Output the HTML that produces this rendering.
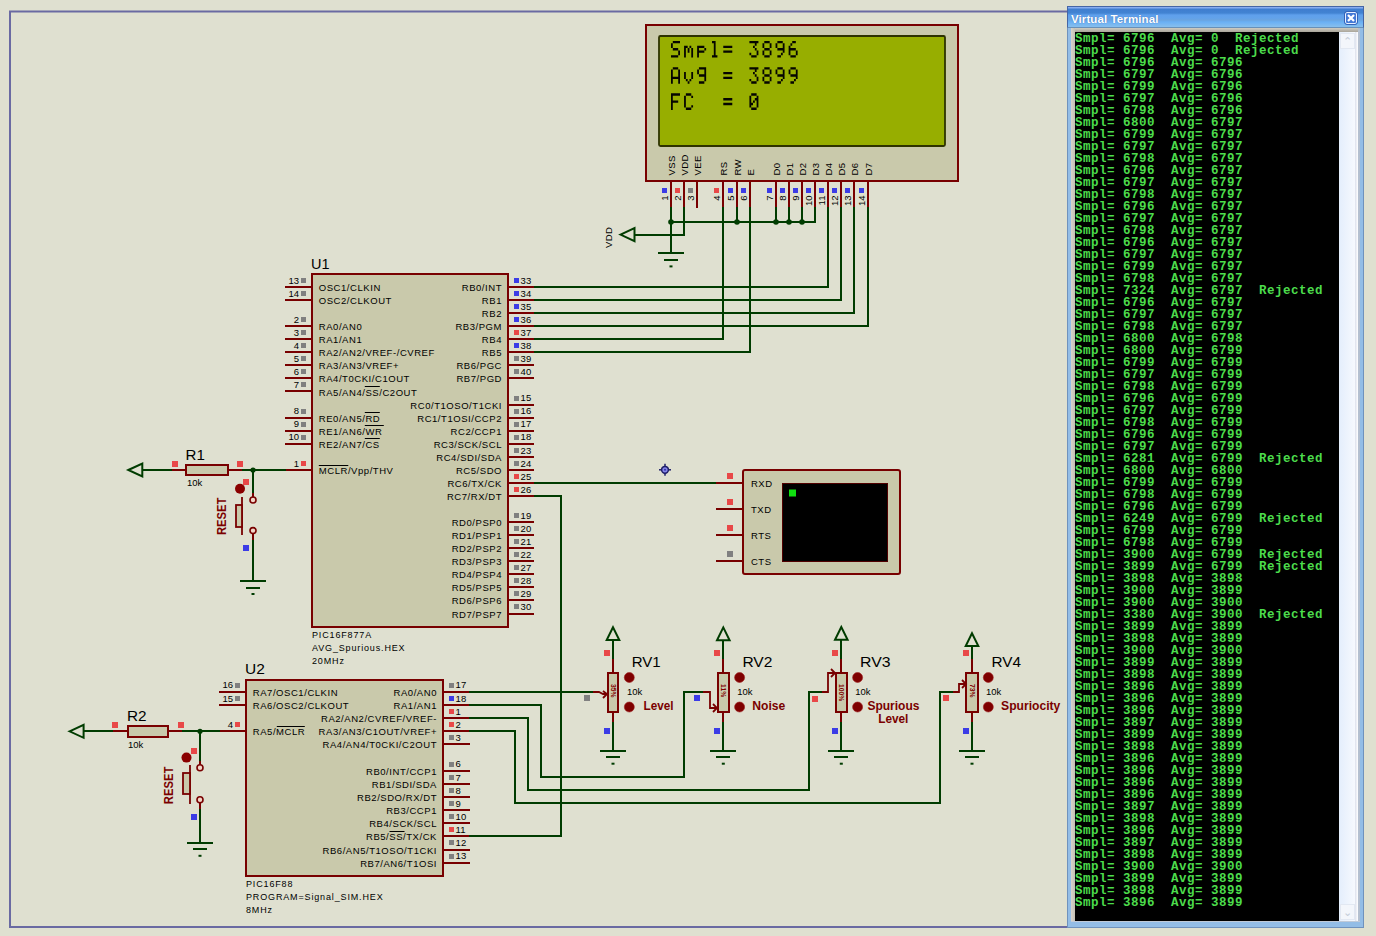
<!DOCTYPE html>
<html><head><meta charset="utf-8"><title>Proteus</title>
<style>
html,body{margin:0;padding:0;width:1376px;height:936px;overflow:hidden;background:#DFE0D0;}
body{position:relative;font-family:"Liberation Sans",sans-serif;}
.vt{position:absolute;box-sizing:border-box;}
#vtf{left:1067px;top:6px;width:297px;height:922px;background:#93bde6;border:1px solid #6f92bd;border-top-color:#4565a5;}
#vtt{left:1067px;top:6px;width:297px;height:22px;border:1px solid #4565a5;border-bottom:1px solid #6890b8;
 background:linear-gradient(#86acf0 0px,#86acf0 1px,#3f7dcf 2px,#4283d2 6px,#5fa0ec 8px,#62a2ea 11px,#6aa4e0 13px,#6ab0f4 15px,#82bcee 19px,#86c0ee 20px);}
#vtt span{position:absolute;left:3px;top:6px;color:#fff;font-weight:bold;font-size:11.5px;letter-spacing:0.1px;text-shadow:0 0 1px #3060b0;}
#vtc{left:1345px;top:12px;width:12px;height:12px;border:1px solid #e8f0ff;border-radius:2px;background:#4479d6;outline:1px solid #3563b8;}
#vti{left:1071px;top:28px;width:288px;height:894px;background:#fff;}
#vtgt{left:1071px;top:28px;width:287px;height:4px;background:linear-gradient(#cfccc2,#a9a59a);}
#vtgl{left:1071px;top:28px;width:4px;height:893px;background:linear-gradient(90deg,#d8d4cc,#c4c0b4);}
#vts{left:1075px;top:32px;width:264px;height:889px;background:#000;overflow:hidden;}
#vts pre{margin:0;position:absolute;left:0px;top:0.5px;font-family:"Liberation Mono",monospace;font-weight:bold;font-size:12.5px;line-height:12px;color:#4cdc4c;letter-spacing:0.5px;}
#vtsb{left:1339px;top:32px;width:16px;height:889px;background:linear-gradient(90deg,#e4eefc,#f6f9fe);}
#vtsb2{left:1355px;top:32px;width:3px;height:889px;background:linear-gradient(90deg,#dce0ec,#fff);}
#vtrb{left:1358px;top:28px;width:2px;height:894px;background:#b4c0d0;}
#vtbb{left:1071px;top:921px;width:289px;height:1px;background:#c0cad8;}
.sbb{left:1340px;width:15px;height:16px;border:1px solid #e2e8f2;background:#f3f6fb;color:#c4ccd8;font-size:11px;text-align:center;line-height:15px;}
</style></head><body>
<svg width="1376" height="936" viewBox="0 0 1376 936" style="position:absolute;left:0;top:0" font-family="Liberation Sans, sans-serif">
<rect x="0" y="0" width="1376" height="936" fill="#DFE0D0"/>
<rect x="10" y="11.5" width="1280" height="915.5" fill="none" stroke="#6a6aa2" stroke-width="2"/>
<rect x="312" y="274" width="196" height="353" fill="#C9C9AB" stroke="#780000" stroke-width="2" rx="0"/>
<line x1="285" y1="287" x2="312" y2="287" stroke="#780000" stroke-width="2"/>
<rect x="301" y="278" width="5" height="5" fill="#808080"/>
<text x="299.0" y="283.7" font-size="9.5" text-anchor="end" letter-spacing="0" fill="#000000" font-weight="normal" >13</text>
<text x="318.8" y="291.0" font-size="9.5" text-anchor="start" letter-spacing="0.55" fill="#000000" font-weight="normal" >OSC1/CLKIN</text>
<line x1="285" y1="300" x2="312" y2="300" stroke="#780000" stroke-width="2"/>
<rect x="301" y="291" width="5" height="5" fill="#808080"/>
<text x="299.0" y="296.8" font-size="9.5" text-anchor="end" letter-spacing="0" fill="#000000" font-weight="normal" >14</text>
<text x="318.8" y="304.1" font-size="9.5" text-anchor="start" letter-spacing="0.55" fill="#000000" font-weight="normal" >OSC2/CLKOUT</text>
<line x1="285" y1="326" x2="312" y2="326" stroke="#780000" stroke-width="2"/>
<rect x="301" y="317" width="5" height="5" fill="#808080"/>
<text x="299.0" y="322.9" font-size="9.5" text-anchor="end" letter-spacing="0" fill="#000000" font-weight="normal" >2</text>
<text x="318.8" y="330.2" font-size="9.5" text-anchor="start" letter-spacing="0.55" fill="#000000" font-weight="normal" >RA0/AN0</text>
<line x1="285" y1="339" x2="312" y2="339" stroke="#780000" stroke-width="2"/>
<rect x="301" y="330" width="5" height="5" fill="#808080"/>
<text x="299.0" y="335.9" font-size="9.5" text-anchor="end" letter-spacing="0" fill="#000000" font-weight="normal" >3</text>
<text x="318.8" y="343.2" font-size="9.5" text-anchor="start" letter-spacing="0.55" fill="#000000" font-weight="normal" >RA1/AN1</text>
<line x1="285" y1="352" x2="312" y2="352" stroke="#780000" stroke-width="2"/>
<rect x="301" y="343" width="5" height="5" fill="#808080"/>
<text x="299.0" y="349.0" font-size="9.5" text-anchor="end" letter-spacing="0" fill="#000000" font-weight="normal" >4</text>
<text x="318.8" y="356.3" font-size="9.5" text-anchor="start" letter-spacing="0.55" fill="#000000" font-weight="normal" >RA2/AN2/VREF-/CVREF</text>
<line x1="285" y1="365" x2="312" y2="365" stroke="#780000" stroke-width="2"/>
<rect x="301" y="356" width="5" height="5" fill="#808080"/>
<text x="299.0" y="362.1" font-size="9.5" text-anchor="end" letter-spacing="0" fill="#000000" font-weight="normal" >5</text>
<text x="318.8" y="369.4" font-size="9.5" text-anchor="start" letter-spacing="0.55" fill="#000000" font-weight="normal" >RA3/AN3/VREF+</text>
<line x1="285" y1="378" x2="312" y2="378" stroke="#780000" stroke-width="2"/>
<rect x="301" y="369" width="5" height="5" fill="#808080"/>
<text x="299.0" y="375.1" font-size="9.5" text-anchor="end" letter-spacing="0" fill="#000000" font-weight="normal" >6</text>
<text x="318.8" y="382.4" font-size="9.5" text-anchor="start" letter-spacing="0.55" fill="#000000" font-weight="normal" >RA4/T0CKI/C1OUT</text>
<line x1="285" y1="391" x2="312" y2="391" stroke="#780000" stroke-width="2"/>
<rect x="301" y="382" width="5" height="5" fill="#808080"/>
<text x="299.0" y="388.2" font-size="9.5" text-anchor="end" letter-spacing="0" fill="#000000" font-weight="normal" >7</text>
<text x="318.8" y="395.5" font-size="9.5" text-anchor="start" letter-spacing="0.55" fill="#000000" font-weight="normal" >RA5/AN4/SS/C2OUT</text>
<line x1="364.8" y1="386.5" x2="379.8" y2="386.5" stroke="#000" stroke-width="1"/>
<line x1="285" y1="418" x2="312" y2="418" stroke="#780000" stroke-width="2"/>
<rect x="301" y="409" width="5" height="5" fill="#808080"/>
<text x="299.0" y="414.3" font-size="9.5" text-anchor="end" letter-spacing="0" fill="#000000" font-weight="normal" >8</text>
<text x="318.8" y="421.6" font-size="9.5" text-anchor="start" letter-spacing="0.55" fill="#000000" font-weight="normal" >RE0/AN5/RD</text>
<line x1="364.8" y1="412.5" x2="379.8" y2="412.5" stroke="#000" stroke-width="1"/>
<line x1="285" y1="431" x2="312" y2="431" stroke="#780000" stroke-width="2"/>
<rect x="301" y="422" width="5" height="5" fill="#808080"/>
<text x="299.0" y="427.4" font-size="9.5" text-anchor="end" letter-spacing="0" fill="#000000" font-weight="normal" >9</text>
<text x="318.8" y="434.7" font-size="9.5" text-anchor="start" letter-spacing="0.55" fill="#000000" font-weight="normal" >RE1/AN6/WR</text>
<line x1="364.8" y1="425.5" x2="383.8" y2="425.5" stroke="#000" stroke-width="1"/>
<line x1="285" y1="444" x2="312" y2="444" stroke="#780000" stroke-width="2"/>
<rect x="301" y="435" width="5" height="5" fill="#808080"/>
<text x="299.0" y="440.4" font-size="9.5" text-anchor="end" letter-spacing="0" fill="#000000" font-weight="normal" >10</text>
<text x="318.8" y="447.7" font-size="9.5" text-anchor="start" letter-spacing="0.55" fill="#000000" font-weight="normal" >RE2/AN7/CS</text>
<line x1="364.8" y1="438.5" x2="379.8" y2="438.5" stroke="#000" stroke-width="1"/>
<line x1="285" y1="470" x2="312" y2="470" stroke="#780000" stroke-width="2"/>
<rect x="301" y="461" width="5" height="5" fill="#E84848"/>
<text x="299.0" y="466.5" font-size="9.5" text-anchor="end" letter-spacing="0" fill="#000000" font-weight="normal" >1</text>
<text x="318.8" y="473.8" font-size="9.5" text-anchor="start" letter-spacing="0.55" fill="#000000" font-weight="normal" >MCLR/Vpp/THV</text>
<line x1="318.8" y1="465.5" x2="348.3" y2="465.5" stroke="#000" stroke-width="1"/>
<line x1="508" y1="287" x2="534" y2="287" stroke="#780000" stroke-width="2"/>
<rect x="514" y="278" width="5" height="5" fill="#3C3CE6"/>
<text x="520.6" y="283.7" font-size="9.5" text-anchor="start" letter-spacing="0" fill="#000000" font-weight="normal" >33</text>
<text x="502.0" y="291.0" font-size="9.5" text-anchor="end" letter-spacing="0.55" fill="#000000" font-weight="normal" >RB0/INT</text>
<line x1="508" y1="300" x2="534" y2="300" stroke="#780000" stroke-width="2"/>
<rect x="514" y="291" width="5" height="5" fill="#3C3CE6"/>
<text x="520.6" y="296.8" font-size="9.5" text-anchor="start" letter-spacing="0" fill="#000000" font-weight="normal" >34</text>
<text x="502.0" y="304.1" font-size="9.5" text-anchor="end" letter-spacing="0.55" fill="#000000" font-weight="normal" >RB1</text>
<line x1="508" y1="313" x2="534" y2="313" stroke="#780000" stroke-width="2"/>
<rect x="514" y="304" width="5" height="5" fill="#3C3CE6"/>
<text x="520.6" y="309.8" font-size="9.5" text-anchor="start" letter-spacing="0" fill="#000000" font-weight="normal" >35</text>
<text x="502.0" y="317.1" font-size="9.5" text-anchor="end" letter-spacing="0.55" fill="#000000" font-weight="normal" >RB2</text>
<line x1="508" y1="326" x2="534" y2="326" stroke="#780000" stroke-width="2"/>
<rect x="514" y="317" width="5" height="5" fill="#3C3CE6"/>
<text x="520.6" y="322.9" font-size="9.5" text-anchor="start" letter-spacing="0" fill="#000000" font-weight="normal" >36</text>
<text x="502.0" y="330.2" font-size="9.5" text-anchor="end" letter-spacing="0.55" fill="#000000" font-weight="normal" >RB3/PGM</text>
<line x1="508" y1="339" x2="534" y2="339" stroke="#780000" stroke-width="2"/>
<rect x="514" y="330" width="5" height="5" fill="#E84848"/>
<text x="520.6" y="335.9" font-size="9.5" text-anchor="start" letter-spacing="0" fill="#000000" font-weight="normal" >37</text>
<text x="502.0" y="343.2" font-size="9.5" text-anchor="end" letter-spacing="0.55" fill="#000000" font-weight="normal" >RB4</text>
<line x1="508" y1="352" x2="534" y2="352" stroke="#780000" stroke-width="2"/>
<rect x="514" y="343" width="5" height="5" fill="#3C3CE6"/>
<text x="520.6" y="349.0" font-size="9.5" text-anchor="start" letter-spacing="0" fill="#000000" font-weight="normal" >38</text>
<text x="502.0" y="356.3" font-size="9.5" text-anchor="end" letter-spacing="0.55" fill="#000000" font-weight="normal" >RB5</text>
<line x1="508" y1="365" x2="534" y2="365" stroke="#780000" stroke-width="2"/>
<rect x="514" y="356" width="5" height="5" fill="#808080"/>
<text x="520.6" y="362.1" font-size="9.5" text-anchor="start" letter-spacing="0" fill="#000000" font-weight="normal" >39</text>
<text x="502.0" y="369.4" font-size="9.5" text-anchor="end" letter-spacing="0.55" fill="#000000" font-weight="normal" >RB6/PGC</text>
<line x1="508" y1="378" x2="534" y2="378" stroke="#780000" stroke-width="2"/>
<rect x="514" y="369" width="5" height="5" fill="#808080"/>
<text x="520.6" y="375.1" font-size="9.5" text-anchor="start" letter-spacing="0" fill="#000000" font-weight="normal" >40</text>
<text x="502.0" y="382.4" font-size="9.5" text-anchor="end" letter-spacing="0.55" fill="#000000" font-weight="normal" >RB7/PGD</text>
<line x1="508" y1="405" x2="534" y2="405" stroke="#780000" stroke-width="2"/>
<rect x="514" y="396" width="5" height="5" fill="#808080"/>
<text x="520.6" y="401.2" font-size="9.5" text-anchor="start" letter-spacing="0" fill="#000000" font-weight="normal" >15</text>
<text x="502.0" y="408.5" font-size="9.5" text-anchor="end" letter-spacing="0.55" fill="#000000" font-weight="normal" >RC0/T1OSO/T1CKI</text>
<line x1="508" y1="418" x2="534" y2="418" stroke="#780000" stroke-width="2"/>
<rect x="514" y="409" width="5" height="5" fill="#808080"/>
<text x="520.6" y="414.3" font-size="9.5" text-anchor="start" letter-spacing="0" fill="#000000" font-weight="normal" >16</text>
<text x="502.0" y="421.6" font-size="9.5" text-anchor="end" letter-spacing="0.55" fill="#000000" font-weight="normal" >RC1/T1OSI/CCP2</text>
<line x1="508" y1="431" x2="534" y2="431" stroke="#780000" stroke-width="2"/>
<rect x="514" y="422" width="5" height="5" fill="#808080"/>
<text x="520.6" y="427.4" font-size="9.5" text-anchor="start" letter-spacing="0" fill="#000000" font-weight="normal" >17</text>
<text x="502.0" y="434.7" font-size="9.5" text-anchor="end" letter-spacing="0.55" fill="#000000" font-weight="normal" >RC2/CCP1</text>
<line x1="508" y1="444" x2="534" y2="444" stroke="#780000" stroke-width="2"/>
<rect x="514" y="435" width="5" height="5" fill="#808080"/>
<text x="520.6" y="440.4" font-size="9.5" text-anchor="start" letter-spacing="0" fill="#000000" font-weight="normal" >18</text>
<text x="502.0" y="447.7" font-size="9.5" text-anchor="end" letter-spacing="0.55" fill="#000000" font-weight="normal" >RC3/SCK/SCL</text>
<line x1="508" y1="457" x2="534" y2="457" stroke="#780000" stroke-width="2"/>
<rect x="514" y="448" width="5" height="5" fill="#808080"/>
<text x="520.6" y="453.5" font-size="9.5" text-anchor="start" letter-spacing="0" fill="#000000" font-weight="normal" >23</text>
<text x="502.0" y="460.8" font-size="9.5" text-anchor="end" letter-spacing="0.55" fill="#000000" font-weight="normal" >RC4/SDI/SDA</text>
<line x1="508" y1="470" x2="534" y2="470" stroke="#780000" stroke-width="2"/>
<rect x="514" y="461" width="5" height="5" fill="#808080"/>
<text x="520.6" y="466.5" font-size="9.5" text-anchor="start" letter-spacing="0" fill="#000000" font-weight="normal" >24</text>
<text x="502.0" y="473.8" font-size="9.5" text-anchor="end" letter-spacing="0.55" fill="#000000" font-weight="normal" >RC5/SDO</text>
<line x1="508" y1="483" x2="534" y2="483" stroke="#780000" stroke-width="2"/>
<rect x="514" y="474" width="5" height="5" fill="#E84848"/>
<text x="520.6" y="479.6" font-size="9.5" text-anchor="start" letter-spacing="0" fill="#000000" font-weight="normal" >25</text>
<text x="502.0" y="486.9" font-size="9.5" text-anchor="end" letter-spacing="0.55" fill="#000000" font-weight="normal" >RC6/TX/CK</text>
<line x1="508" y1="496" x2="534" y2="496" stroke="#780000" stroke-width="2"/>
<rect x="514" y="487" width="5" height="5" fill="#E84848"/>
<text x="520.6" y="492.7" font-size="9.5" text-anchor="start" letter-spacing="0" fill="#000000" font-weight="normal" >26</text>
<text x="502.0" y="500.0" font-size="9.5" text-anchor="end" letter-spacing="0.55" fill="#000000" font-weight="normal" >RC7/RX/DT</text>
<line x1="508" y1="522" x2="534" y2="522" stroke="#780000" stroke-width="2"/>
<rect x="514" y="513" width="5" height="5" fill="#808080"/>
<text x="520.6" y="518.8" font-size="9.5" text-anchor="start" letter-spacing="0" fill="#000000" font-weight="normal" >19</text>
<text x="502.0" y="526.1" font-size="9.5" text-anchor="end" letter-spacing="0.55" fill="#000000" font-weight="normal" >RD0/PSP0</text>
<line x1="508" y1="535" x2="534" y2="535" stroke="#780000" stroke-width="2"/>
<rect x="514" y="526" width="5" height="5" fill="#808080"/>
<text x="520.6" y="531.8" font-size="9.5" text-anchor="start" letter-spacing="0" fill="#000000" font-weight="normal" >20</text>
<text x="502.0" y="539.1" font-size="9.5" text-anchor="end" letter-spacing="0.55" fill="#000000" font-weight="normal" >RD1/PSP1</text>
<line x1="508" y1="548" x2="534" y2="548" stroke="#780000" stroke-width="2"/>
<rect x="514" y="539" width="5" height="5" fill="#808080"/>
<text x="520.6" y="544.9" font-size="9.5" text-anchor="start" letter-spacing="0" fill="#000000" font-weight="normal" >21</text>
<text x="502.0" y="552.2" font-size="9.5" text-anchor="end" letter-spacing="0.55" fill="#000000" font-weight="normal" >RD2/PSP2</text>
<line x1="508" y1="561" x2="534" y2="561" stroke="#780000" stroke-width="2"/>
<rect x="514" y="552" width="5" height="5" fill="#808080"/>
<text x="520.6" y="558.0" font-size="9.5" text-anchor="start" letter-spacing="0" fill="#000000" font-weight="normal" >22</text>
<text x="502.0" y="565.3" font-size="9.5" text-anchor="end" letter-spacing="0.55" fill="#000000" font-weight="normal" >RD3/PSP3</text>
<line x1="508" y1="574" x2="534" y2="574" stroke="#780000" stroke-width="2"/>
<rect x="514" y="565" width="5" height="5" fill="#808080"/>
<text x="520.6" y="571.0" font-size="9.5" text-anchor="start" letter-spacing="0" fill="#000000" font-weight="normal" >27</text>
<text x="502.0" y="578.3" font-size="9.5" text-anchor="end" letter-spacing="0.55" fill="#000000" font-weight="normal" >RD4/PSP4</text>
<line x1="508" y1="587" x2="534" y2="587" stroke="#780000" stroke-width="2"/>
<rect x="514" y="578" width="5" height="5" fill="#808080"/>
<text x="520.6" y="584.1" font-size="9.5" text-anchor="start" letter-spacing="0" fill="#000000" font-weight="normal" >28</text>
<text x="502.0" y="591.4" font-size="9.5" text-anchor="end" letter-spacing="0.55" fill="#000000" font-weight="normal" >RD5/PSP5</text>
<line x1="508" y1="600" x2="534" y2="600" stroke="#780000" stroke-width="2"/>
<rect x="514" y="591" width="5" height="5" fill="#808080"/>
<text x="520.6" y="597.1" font-size="9.5" text-anchor="start" letter-spacing="0" fill="#000000" font-weight="normal" >29</text>
<text x="502.0" y="604.4" font-size="9.5" text-anchor="end" letter-spacing="0.55" fill="#000000" font-weight="normal" >RD6/PSP6</text>
<line x1="508" y1="614" x2="534" y2="614" stroke="#780000" stroke-width="2"/>
<rect x="514" y="604" width="5" height="5" fill="#808080"/>
<text x="520.6" y="610.2" font-size="9.5" text-anchor="start" letter-spacing="0" fill="#000000" font-weight="normal" >30</text>
<text x="502.0" y="617.5" font-size="9.5" text-anchor="end" letter-spacing="0.55" fill="#000000" font-weight="normal" >RD7/PSP7</text>
<text x="311.0" y="268.6" font-size="15.5" text-anchor="start" letter-spacing="0" fill="#000000" font-weight="normal" textLength="18.5" lengthAdjust="spacingAndGlyphs" >U1</text>
<text x="312.0" y="638.0" font-size="9" text-anchor="start" letter-spacing="0.85" fill="#000000" font-weight="normal" >PIC16F877A</text>
<text x="312.0" y="651.0" font-size="9" text-anchor="start" letter-spacing="0.85" fill="#000000" font-weight="normal" >AVG_Spurious.HEX</text>
<text x="312.0" y="664.0" font-size="9" text-anchor="start" letter-spacing="0.85" fill="#000000" font-weight="normal" >20MHz</text>
<rect x="246" y="680" width="197" height="196" fill="#C9C9AB" stroke="#780000" stroke-width="2" rx="0"/>
<line x1="219" y1="692" x2="246" y2="692" stroke="#780000" stroke-width="2"/>
<rect x="235" y="683" width="5" height="5" fill="#808080"/>
<text x="233.0" y="688.4" font-size="9.5" text-anchor="end" letter-spacing="0" fill="#000000" font-weight="normal" >16</text>
<text x="252.8" y="695.7" font-size="9.5" text-anchor="start" letter-spacing="0.55" fill="#000000" font-weight="normal" >RA7/OSC1/CLKIN</text>
<line x1="219" y1="705" x2="246" y2="705" stroke="#780000" stroke-width="2"/>
<rect x="235" y="696" width="5" height="5" fill="#808080"/>
<text x="233.0" y="701.6" font-size="9.5" text-anchor="end" letter-spacing="0" fill="#000000" font-weight="normal" >15</text>
<text x="252.8" y="708.9" font-size="9.5" text-anchor="start" letter-spacing="0.55" fill="#000000" font-weight="normal" >RA6/OSC2/CLKOUT</text>
<line x1="219" y1="731" x2="246" y2="731" stroke="#780000" stroke-width="2"/>
<rect x="235" y="722" width="5" height="5" fill="#E84848"/>
<text x="233.0" y="727.9" font-size="9.5" text-anchor="end" letter-spacing="0" fill="#000000" font-weight="normal" >4</text>
<text x="252.8" y="735.2" font-size="9.5" text-anchor="start" letter-spacing="0.55" fill="#000000" font-weight="normal" >RA5/MCLR</text>
<line x1="276.8" y1="726.5" x2="304.8" y2="726.5" stroke="#000" stroke-width="1"/>
<line x1="443" y1="692" x2="470" y2="692" stroke="#780000" stroke-width="2"/>
<rect x="449" y="683" width="5" height="5" fill="#808080"/>
<text x="455.6" y="688.4" font-size="9.5" text-anchor="start" letter-spacing="0" fill="#000000" font-weight="normal" >17</text>
<text x="437.0" y="695.7" font-size="9.5" text-anchor="end" letter-spacing="0.55" fill="#000000" font-weight="normal" >RA0/AN0</text>
<line x1="443" y1="705" x2="470" y2="705" stroke="#780000" stroke-width="2"/>
<rect x="449" y="696" width="5" height="5" fill="#3C3CE6"/>
<text x="455.6" y="701.6" font-size="9.5" text-anchor="start" letter-spacing="0" fill="#000000" font-weight="normal" >18</text>
<text x="437.0" y="708.9" font-size="9.5" text-anchor="end" letter-spacing="0.55" fill="#000000" font-weight="normal" >RA1/AN1</text>
<line x1="443" y1="718" x2="470" y2="718" stroke="#780000" stroke-width="2"/>
<rect x="449" y="709" width="5" height="5" fill="#E84848"/>
<text x="455.6" y="714.7" font-size="9.5" text-anchor="start" letter-spacing="0" fill="#000000" font-weight="normal" >1</text>
<text x="437.0" y="722.0" font-size="9.5" text-anchor="end" letter-spacing="0.55" fill="#000000" font-weight="normal" >RA2/AN2/CVREF/VREF-</text>
<line x1="443" y1="731" x2="470" y2="731" stroke="#780000" stroke-width="2"/>
<rect x="449" y="722" width="5" height="5" fill="#E84848"/>
<text x="455.6" y="727.9" font-size="9.5" text-anchor="start" letter-spacing="0" fill="#000000" font-weight="normal" >2</text>
<text x="437.0" y="735.2" font-size="9.5" text-anchor="end" letter-spacing="0.55" fill="#000000" font-weight="normal" >RA3/AN3/C1OUT/VREF+</text>
<line x1="443" y1="744" x2="470" y2="744" stroke="#780000" stroke-width="2"/>
<rect x="449" y="735" width="5" height="5" fill="#808080"/>
<text x="455.6" y="741.0" font-size="9.5" text-anchor="start" letter-spacing="0" fill="#000000" font-weight="normal" >3</text>
<text x="437.0" y="748.3" font-size="9.5" text-anchor="end" letter-spacing="0.55" fill="#000000" font-weight="normal" >RA4/AN4/T0CKI/C2OUT</text>
<line x1="443" y1="771" x2="470" y2="771" stroke="#780000" stroke-width="2"/>
<rect x="449" y="762" width="5" height="5" fill="#808080"/>
<text x="455.6" y="767.3" font-size="9.5" text-anchor="start" letter-spacing="0" fill="#000000" font-weight="normal" >6</text>
<text x="437.0" y="774.6" font-size="9.5" text-anchor="end" letter-spacing="0.55" fill="#000000" font-weight="normal" >RB0/INT/CCP1</text>
<line x1="443" y1="784" x2="470" y2="784" stroke="#780000" stroke-width="2"/>
<rect x="449" y="775" width="5" height="5" fill="#808080"/>
<text x="455.6" y="780.5" font-size="9.5" text-anchor="start" letter-spacing="0" fill="#000000" font-weight="normal" >7</text>
<text x="437.0" y="787.8" font-size="9.5" text-anchor="end" letter-spacing="0.55" fill="#000000" font-weight="normal" >RB1/SDI/SDA</text>
<line x1="443" y1="797" x2="470" y2="797" stroke="#780000" stroke-width="2"/>
<rect x="449" y="788" width="5" height="5" fill="#808080"/>
<text x="455.6" y="793.6" font-size="9.5" text-anchor="start" letter-spacing="0" fill="#000000" font-weight="normal" >8</text>
<text x="437.0" y="800.9" font-size="9.5" text-anchor="end" letter-spacing="0.55" fill="#000000" font-weight="normal" >RB2/SDO/RX/DT</text>
<line x1="443" y1="810" x2="470" y2="810" stroke="#780000" stroke-width="2"/>
<rect x="449" y="801" width="5" height="5" fill="#808080"/>
<text x="455.6" y="806.8" font-size="9.5" text-anchor="start" letter-spacing="0" fill="#000000" font-weight="normal" >9</text>
<text x="437.0" y="814.1" font-size="9.5" text-anchor="end" letter-spacing="0.55" fill="#000000" font-weight="normal" >RB3/CCP1</text>
<line x1="443" y1="823" x2="470" y2="823" stroke="#780000" stroke-width="2"/>
<rect x="449" y="814" width="5" height="5" fill="#808080"/>
<text x="455.6" y="819.9" font-size="9.5" text-anchor="start" letter-spacing="0" fill="#000000" font-weight="normal" >10</text>
<text x="437.0" y="827.2" font-size="9.5" text-anchor="end" letter-spacing="0.55" fill="#000000" font-weight="normal" >RB4/SCK/SCL</text>
<line x1="443" y1="836" x2="470" y2="836" stroke="#780000" stroke-width="2"/>
<rect x="449" y="827" width="5" height="5" fill="#E84848"/>
<text x="455.6" y="833.1" font-size="9.5" text-anchor="start" letter-spacing="0" fill="#000000" font-weight="normal" >11</text>
<text x="437.0" y="840.4" font-size="9.5" text-anchor="end" letter-spacing="0.55" fill="#000000" font-weight="normal" >RB5/SS/TX/CK</text>
<line x1="443" y1="850" x2="470" y2="850" stroke="#780000" stroke-width="2"/>
<rect x="449" y="840" width="5" height="5" fill="#808080"/>
<text x="455.6" y="846.2" font-size="9.5" text-anchor="start" letter-spacing="0" fill="#000000" font-weight="normal" >12</text>
<text x="437.0" y="853.5" font-size="9.5" text-anchor="end" letter-spacing="0.55" fill="#000000" font-weight="normal" >RB6/AN5/T1OSO/T1CKI</text>
<line x1="443" y1="863" x2="470" y2="863" stroke="#780000" stroke-width="2"/>
<rect x="449" y="854" width="5" height="5" fill="#808080"/>
<text x="455.6" y="859.4" font-size="9.5" text-anchor="start" letter-spacing="0" fill="#000000" font-weight="normal" >13</text>
<text x="437.0" y="866.7" font-size="9.5" text-anchor="end" letter-spacing="0.55" fill="#000000" font-weight="normal" >RB7/AN6/T1OSI</text>
<text x="245.0" y="674.0" font-size="15.5" text-anchor="start" letter-spacing="0" fill="#000000" font-weight="normal" textLength="19.8" lengthAdjust="spacingAndGlyphs" >U2</text>
<text x="246.0" y="886.5" font-size="9" text-anchor="start" letter-spacing="0.85" fill="#000000" font-weight="normal" >PIC16F88</text>
<text x="246.0" y="899.5" font-size="9" text-anchor="start" letter-spacing="0.85" fill="#000000" font-weight="normal" >PROGRAM=Signal_SIM.HEX</text>
<text x="246.0" y="912.5" font-size="9" text-anchor="start" letter-spacing="0.85" fill="#000000" font-weight="normal" >8MHz</text>
<line x1="389.5" y1="831.5" x2="404.5" y2="831.5" stroke="#000" stroke-width="1"/>
<rect x="646" y="25" width="312" height="156" fill="#C9C9AB" stroke="#780000" stroke-width="2" rx="0"/>
<rect x="659" y="36" width="286" height="110" fill="#97ae00" stroke="#2e3300" stroke-width="1.8" rx="1.5"/>
<path d="M672.80 41.00h1.80v2.37h-1.80zM674.60 41.00h1.80v2.37h-1.80zM676.40 41.00h1.80v2.37h-1.80zM678.20 41.00h1.80v2.37h-1.80zM671.00 43.37h1.80v2.37h-1.80zM671.00 45.74h1.80v2.37h-1.80zM672.80 48.11h1.80v2.37h-1.80zM674.60 48.11h1.80v2.37h-1.80zM676.40 48.11h1.80v2.37h-1.80zM678.20 50.48h1.80v2.37h-1.80zM678.20 52.85h1.80v2.37h-1.80zM671.00 55.22h1.80v2.37h-1.80zM672.80 55.22h1.80v2.37h-1.80zM674.60 55.22h1.80v2.37h-1.80zM676.40 55.22h1.80v2.37h-1.80zM684.07 45.74h1.80v2.37h-1.80zM685.87 45.74h1.80v2.37h-1.80zM689.47 45.74h1.80v2.37h-1.80zM684.07 48.11h1.80v2.37h-1.80zM687.67 48.11h1.80v2.37h-1.80zM691.27 48.11h1.80v2.37h-1.80zM684.07 50.48h1.80v2.37h-1.80zM687.67 50.48h1.80v2.37h-1.80zM691.27 50.48h1.80v2.37h-1.80zM684.07 52.85h1.80v2.37h-1.80zM691.27 52.85h1.80v2.37h-1.80zM684.07 55.22h1.80v2.37h-1.80zM691.27 55.22h1.80v2.37h-1.80zM697.14 45.74h1.80v2.37h-1.80zM698.94 45.74h1.80v2.37h-1.80zM700.74 45.74h1.80v2.37h-1.80zM702.54 45.74h1.80v2.37h-1.80zM697.14 48.11h1.80v2.37h-1.80zM704.34 48.11h1.80v2.37h-1.80zM697.14 50.48h1.80v2.37h-1.80zM698.94 50.48h1.80v2.37h-1.80zM700.74 50.48h1.80v2.37h-1.80zM702.54 50.48h1.80v2.37h-1.80zM697.14 52.85h1.80v2.37h-1.80zM697.14 55.22h1.80v2.37h-1.80zM712.01 41.00h1.80v2.37h-1.80zM713.81 41.00h1.80v2.37h-1.80zM713.81 43.37h1.80v2.37h-1.80zM713.81 45.74h1.80v2.37h-1.80zM713.81 48.11h1.80v2.37h-1.80zM713.81 50.48h1.80v2.37h-1.80zM713.81 52.85h1.80v2.37h-1.80zM712.01 55.22h1.80v2.37h-1.80zM713.81 55.22h1.80v2.37h-1.80zM715.61 55.22h1.80v2.37h-1.80zM723.28 45.74h1.80v2.37h-1.80zM725.08 45.74h1.80v2.37h-1.80zM726.88 45.74h1.80v2.37h-1.80zM728.68 45.74h1.80v2.37h-1.80zM730.48 45.74h1.80v2.37h-1.80zM723.28 50.48h1.80v2.37h-1.80zM725.08 50.48h1.80v2.37h-1.80zM726.88 50.48h1.80v2.37h-1.80zM728.68 50.48h1.80v2.37h-1.80zM730.48 50.48h1.80v2.37h-1.80zM749.42 41.00h1.80v2.37h-1.80zM751.22 41.00h1.80v2.37h-1.80zM753.02 41.00h1.80v2.37h-1.80zM754.82 41.00h1.80v2.37h-1.80zM756.62 41.00h1.80v2.37h-1.80zM754.82 43.37h1.80v2.37h-1.80zM753.02 45.74h1.80v2.37h-1.80zM754.82 48.11h1.80v2.37h-1.80zM756.62 50.48h1.80v2.37h-1.80zM749.42 52.85h1.80v2.37h-1.80zM756.62 52.85h1.80v2.37h-1.80zM751.22 55.22h1.80v2.37h-1.80zM753.02 55.22h1.80v2.37h-1.80zM754.82 55.22h1.80v2.37h-1.80zM764.29 41.00h1.80v2.37h-1.80zM766.09 41.00h1.80v2.37h-1.80zM767.89 41.00h1.80v2.37h-1.80zM762.49 43.37h1.80v2.37h-1.80zM769.69 43.37h1.80v2.37h-1.80zM762.49 45.74h1.80v2.37h-1.80zM769.69 45.74h1.80v2.37h-1.80zM764.29 48.11h1.80v2.37h-1.80zM766.09 48.11h1.80v2.37h-1.80zM767.89 48.11h1.80v2.37h-1.80zM762.49 50.48h1.80v2.37h-1.80zM769.69 50.48h1.80v2.37h-1.80zM762.49 52.85h1.80v2.37h-1.80zM769.69 52.85h1.80v2.37h-1.80zM764.29 55.22h1.80v2.37h-1.80zM766.09 55.22h1.80v2.37h-1.80zM767.89 55.22h1.80v2.37h-1.80zM777.36 41.00h1.80v2.37h-1.80zM779.16 41.00h1.80v2.37h-1.80zM780.96 41.00h1.80v2.37h-1.80zM775.56 43.37h1.80v2.37h-1.80zM782.76 43.37h1.80v2.37h-1.80zM775.56 45.74h1.80v2.37h-1.80zM782.76 45.74h1.80v2.37h-1.80zM777.36 48.11h1.80v2.37h-1.80zM779.16 48.11h1.80v2.37h-1.80zM780.96 48.11h1.80v2.37h-1.80zM782.76 48.11h1.80v2.37h-1.80zM782.76 50.48h1.80v2.37h-1.80zM780.96 52.85h1.80v2.37h-1.80zM777.36 55.22h1.80v2.37h-1.80zM779.16 55.22h1.80v2.37h-1.80zM792.23 41.00h1.80v2.37h-1.80zM794.03 41.00h1.80v2.37h-1.80zM790.43 43.37h1.80v2.37h-1.80zM788.63 45.74h1.80v2.37h-1.80zM788.63 48.11h1.80v2.37h-1.80zM790.43 48.11h1.80v2.37h-1.80zM792.23 48.11h1.80v2.37h-1.80zM794.03 48.11h1.80v2.37h-1.80zM788.63 50.48h1.80v2.37h-1.80zM795.83 50.48h1.80v2.37h-1.80zM788.63 52.85h1.80v2.37h-1.80zM795.83 52.85h1.80v2.37h-1.80zM790.43 55.22h1.80v2.37h-1.80zM792.23 55.22h1.80v2.37h-1.80zM794.03 55.22h1.80v2.37h-1.80zM672.80 67.15h1.80v2.37h-1.80zM674.60 67.15h1.80v2.37h-1.80zM676.40 67.15h1.80v2.37h-1.80zM671.00 69.52h1.80v2.37h-1.80zM678.20 69.52h1.80v2.37h-1.80zM671.00 71.89h1.80v2.37h-1.80zM678.20 71.89h1.80v2.37h-1.80zM671.00 74.26h1.80v2.37h-1.80zM678.20 74.26h1.80v2.37h-1.80zM671.00 76.63h1.80v2.37h-1.80zM672.80 76.63h1.80v2.37h-1.80zM674.60 76.63h1.80v2.37h-1.80zM676.40 76.63h1.80v2.37h-1.80zM678.20 76.63h1.80v2.37h-1.80zM671.00 79.00h1.80v2.37h-1.80zM678.20 79.00h1.80v2.37h-1.80zM671.00 81.37h1.80v2.37h-1.80zM678.20 81.37h1.80v2.37h-1.80zM684.07 71.89h1.80v2.37h-1.80zM691.27 71.89h1.80v2.37h-1.80zM684.07 74.26h1.80v2.37h-1.80zM691.27 74.26h1.80v2.37h-1.80zM684.07 76.63h1.80v2.37h-1.80zM691.27 76.63h1.80v2.37h-1.80zM685.87 79.00h1.80v2.37h-1.80zM689.47 79.00h1.80v2.37h-1.80zM687.67 81.37h1.80v2.37h-1.80zM698.94 67.15h1.80v2.37h-1.80zM700.74 67.15h1.80v2.37h-1.80zM702.54 67.15h1.80v2.37h-1.80zM704.34 67.15h1.80v2.37h-1.80zM697.14 69.52h1.80v2.37h-1.80zM704.34 69.52h1.80v2.37h-1.80zM697.14 71.89h1.80v2.37h-1.80zM704.34 71.89h1.80v2.37h-1.80zM698.94 74.26h1.80v2.37h-1.80zM700.74 74.26h1.80v2.37h-1.80zM702.54 74.26h1.80v2.37h-1.80zM704.34 74.26h1.80v2.37h-1.80zM704.34 76.63h1.80v2.37h-1.80zM704.34 79.00h1.80v2.37h-1.80zM698.94 81.37h1.80v2.37h-1.80zM700.74 81.37h1.80v2.37h-1.80zM702.54 81.37h1.80v2.37h-1.80zM723.28 71.89h1.80v2.37h-1.80zM725.08 71.89h1.80v2.37h-1.80zM726.88 71.89h1.80v2.37h-1.80zM728.68 71.89h1.80v2.37h-1.80zM730.48 71.89h1.80v2.37h-1.80zM723.28 76.63h1.80v2.37h-1.80zM725.08 76.63h1.80v2.37h-1.80zM726.88 76.63h1.80v2.37h-1.80zM728.68 76.63h1.80v2.37h-1.80zM730.48 76.63h1.80v2.37h-1.80zM749.42 67.15h1.80v2.37h-1.80zM751.22 67.15h1.80v2.37h-1.80zM753.02 67.15h1.80v2.37h-1.80zM754.82 67.15h1.80v2.37h-1.80zM756.62 67.15h1.80v2.37h-1.80zM754.82 69.52h1.80v2.37h-1.80zM753.02 71.89h1.80v2.37h-1.80zM754.82 74.26h1.80v2.37h-1.80zM756.62 76.63h1.80v2.37h-1.80zM749.42 79.00h1.80v2.37h-1.80zM756.62 79.00h1.80v2.37h-1.80zM751.22 81.37h1.80v2.37h-1.80zM753.02 81.37h1.80v2.37h-1.80zM754.82 81.37h1.80v2.37h-1.80zM764.29 67.15h1.80v2.37h-1.80zM766.09 67.15h1.80v2.37h-1.80zM767.89 67.15h1.80v2.37h-1.80zM762.49 69.52h1.80v2.37h-1.80zM769.69 69.52h1.80v2.37h-1.80zM762.49 71.89h1.80v2.37h-1.80zM769.69 71.89h1.80v2.37h-1.80zM764.29 74.26h1.80v2.37h-1.80zM766.09 74.26h1.80v2.37h-1.80zM767.89 74.26h1.80v2.37h-1.80zM762.49 76.63h1.80v2.37h-1.80zM769.69 76.63h1.80v2.37h-1.80zM762.49 79.00h1.80v2.37h-1.80zM769.69 79.00h1.80v2.37h-1.80zM764.29 81.37h1.80v2.37h-1.80zM766.09 81.37h1.80v2.37h-1.80zM767.89 81.37h1.80v2.37h-1.80zM777.36 67.15h1.80v2.37h-1.80zM779.16 67.15h1.80v2.37h-1.80zM780.96 67.15h1.80v2.37h-1.80zM775.56 69.52h1.80v2.37h-1.80zM782.76 69.52h1.80v2.37h-1.80zM775.56 71.89h1.80v2.37h-1.80zM782.76 71.89h1.80v2.37h-1.80zM777.36 74.26h1.80v2.37h-1.80zM779.16 74.26h1.80v2.37h-1.80zM780.96 74.26h1.80v2.37h-1.80zM782.76 74.26h1.80v2.37h-1.80zM782.76 76.63h1.80v2.37h-1.80zM780.96 79.00h1.80v2.37h-1.80zM777.36 81.37h1.80v2.37h-1.80zM779.16 81.37h1.80v2.37h-1.80zM790.43 67.15h1.80v2.37h-1.80zM792.23 67.15h1.80v2.37h-1.80zM794.03 67.15h1.80v2.37h-1.80zM788.63 69.52h1.80v2.37h-1.80zM795.83 69.52h1.80v2.37h-1.80zM788.63 71.89h1.80v2.37h-1.80zM795.83 71.89h1.80v2.37h-1.80zM790.43 74.26h1.80v2.37h-1.80zM792.23 74.26h1.80v2.37h-1.80zM794.03 74.26h1.80v2.37h-1.80zM795.83 74.26h1.80v2.37h-1.80zM795.83 76.63h1.80v2.37h-1.80zM794.03 79.00h1.80v2.37h-1.80zM790.43 81.37h1.80v2.37h-1.80zM792.23 81.37h1.80v2.37h-1.80zM671.00 93.30h1.80v2.37h-1.80zM672.80 93.30h1.80v2.37h-1.80zM674.60 93.30h1.80v2.37h-1.80zM676.40 93.30h1.80v2.37h-1.80zM678.20 93.30h1.80v2.37h-1.80zM671.00 95.67h1.80v2.37h-1.80zM671.00 98.04h1.80v2.37h-1.80zM671.00 100.41h1.80v2.37h-1.80zM672.80 100.41h1.80v2.37h-1.80zM674.60 100.41h1.80v2.37h-1.80zM676.40 100.41h1.80v2.37h-1.80zM671.00 102.78h1.80v2.37h-1.80zM671.00 105.15h1.80v2.37h-1.80zM671.00 107.52h1.80v2.37h-1.80zM685.87 93.30h1.80v2.37h-1.80zM687.67 93.30h1.80v2.37h-1.80zM689.47 93.30h1.80v2.37h-1.80zM684.07 95.67h1.80v2.37h-1.80zM691.27 95.67h1.80v2.37h-1.80zM684.07 98.04h1.80v2.37h-1.80zM684.07 100.41h1.80v2.37h-1.80zM684.07 102.78h1.80v2.37h-1.80zM684.07 105.15h1.80v2.37h-1.80zM691.27 105.15h1.80v2.37h-1.80zM685.87 107.52h1.80v2.37h-1.80zM687.67 107.52h1.80v2.37h-1.80zM689.47 107.52h1.80v2.37h-1.80zM723.28 98.04h1.80v2.37h-1.80zM725.08 98.04h1.80v2.37h-1.80zM726.88 98.04h1.80v2.37h-1.80zM728.68 98.04h1.80v2.37h-1.80zM730.48 98.04h1.80v2.37h-1.80zM723.28 102.78h1.80v2.37h-1.80zM725.08 102.78h1.80v2.37h-1.80zM726.88 102.78h1.80v2.37h-1.80zM728.68 102.78h1.80v2.37h-1.80zM730.48 102.78h1.80v2.37h-1.80zM751.22 93.30h1.80v2.37h-1.80zM753.02 93.30h1.80v2.37h-1.80zM754.82 93.30h1.80v2.37h-1.80zM749.42 95.67h1.80v2.37h-1.80zM756.62 95.67h1.80v2.37h-1.80zM749.42 98.04h1.80v2.37h-1.80zM754.82 98.04h1.80v2.37h-1.80zM756.62 98.04h1.80v2.37h-1.80zM749.42 100.41h1.80v2.37h-1.80zM753.02 100.41h1.80v2.37h-1.80zM756.62 100.41h1.80v2.37h-1.80zM749.42 102.78h1.80v2.37h-1.80zM751.22 102.78h1.80v2.37h-1.80zM756.62 102.78h1.80v2.37h-1.80zM749.42 105.15h1.80v2.37h-1.80zM756.62 105.15h1.80v2.37h-1.80zM751.22 107.52h1.80v2.37h-1.80zM753.02 107.52h1.80v2.37h-1.80zM754.82 107.52h1.80v2.37h-1.80z" fill="#050500"/>
<line x1="671" y1="181" x2="671" y2="208" stroke="#780000" stroke-width="2"/>
<rect x="662" y="188" width="5" height="5" fill="#3C3CE6"/>
<text x="0.0" y="0.0" font-size="9.5" text-anchor="end" letter-spacing="0" fill="#000000" font-weight="normal" transform="translate(668.2,195.5) rotate(-90)">1</text>
<text x="0.0" y="0.0" font-size="9.5" text-anchor="start" letter-spacing="0.4" fill="#000000" font-weight="normal" transform="translate(674.8,175.5) rotate(-90)">VSS</text>
<line x1="684" y1="181" x2="684" y2="208" stroke="#780000" stroke-width="2"/>
<rect x="675" y="188" width="5" height="5" fill="#E84848"/>
<text x="0.0" y="0.0" font-size="9.5" text-anchor="end" letter-spacing="0" fill="#000000" font-weight="normal" transform="translate(681.2,195.5) rotate(-90)">2</text>
<text x="0.0" y="0.0" font-size="9.5" text-anchor="start" letter-spacing="0.4" fill="#000000" font-weight="normal" transform="translate(687.8,175.5) rotate(-90)">VDD</text>
<line x1="697" y1="181" x2="697" y2="208" stroke="#780000" stroke-width="2"/>
<rect x="688" y="188" width="5" height="5" fill="#808080"/>
<text x="0.0" y="0.0" font-size="9.5" text-anchor="end" letter-spacing="0" fill="#000000" font-weight="normal" transform="translate(694.2,195.5) rotate(-90)">3</text>
<text x="0.0" y="0.0" font-size="9.5" text-anchor="start" letter-spacing="0.4" fill="#000000" font-weight="normal" transform="translate(700.8,175.5) rotate(-90)">VEE</text>
<line x1="723" y1="181" x2="723" y2="208" stroke="#780000" stroke-width="2"/>
<rect x="714" y="188" width="5" height="5" fill="#E84848"/>
<text x="0.0" y="0.0" font-size="9.5" text-anchor="end" letter-spacing="0" fill="#000000" font-weight="normal" transform="translate(720.2,195.5) rotate(-90)">4</text>
<text x="0.0" y="0.0" font-size="9.5" text-anchor="start" letter-spacing="0.4" fill="#000000" font-weight="normal" transform="translate(726.8,175.5) rotate(-90)">RS</text>
<line x1="737" y1="181" x2="737" y2="208" stroke="#780000" stroke-width="2"/>
<rect x="728" y="188" width="5" height="5" fill="#3C3CE6"/>
<text x="0.0" y="0.0" font-size="9.5" text-anchor="end" letter-spacing="0" fill="#000000" font-weight="normal" transform="translate(734.2,195.5) rotate(-90)">5</text>
<text x="0.0" y="0.0" font-size="9.5" text-anchor="start" letter-spacing="0.4" fill="#000000" font-weight="normal" transform="translate(740.8,175.5) rotate(-90)">RW</text>
<line x1="750" y1="181" x2="750" y2="208" stroke="#780000" stroke-width="2"/>
<rect x="741" y="188" width="5" height="5" fill="#3C3CE6"/>
<text x="0.0" y="0.0" font-size="9.5" text-anchor="end" letter-spacing="0" fill="#000000" font-weight="normal" transform="translate(747.2,195.5) rotate(-90)">6</text>
<text x="0.0" y="0.0" font-size="9.5" text-anchor="start" letter-spacing="0.4" fill="#000000" font-weight="normal" transform="translate(753.8,175.5) rotate(-90)">E</text>
<line x1="776" y1="181" x2="776" y2="208" stroke="#780000" stroke-width="2"/>
<rect x="767" y="188" width="5" height="5" fill="#3C3CE6"/>
<text x="0.0" y="0.0" font-size="9.5" text-anchor="end" letter-spacing="0" fill="#000000" font-weight="normal" transform="translate(773.2,195.5) rotate(-90)">7</text>
<text x="0.0" y="0.0" font-size="9.5" text-anchor="start" letter-spacing="0.4" fill="#000000" font-weight="normal" transform="translate(779.8,175.5) rotate(-90)">D0</text>
<line x1="789" y1="181" x2="789" y2="208" stroke="#780000" stroke-width="2"/>
<rect x="780" y="188" width="5" height="5" fill="#3C3CE6"/>
<text x="0.0" y="0.0" font-size="9.5" text-anchor="end" letter-spacing="0" fill="#000000" font-weight="normal" transform="translate(786.2,195.5) rotate(-90)">8</text>
<text x="0.0" y="0.0" font-size="9.5" text-anchor="start" letter-spacing="0.4" fill="#000000" font-weight="normal" transform="translate(792.8,175.5) rotate(-90)">D1</text>
<line x1="802" y1="181" x2="802" y2="208" stroke="#780000" stroke-width="2"/>
<rect x="793" y="188" width="5" height="5" fill="#3C3CE6"/>
<text x="0.0" y="0.0" font-size="9.5" text-anchor="end" letter-spacing="0" fill="#000000" font-weight="normal" transform="translate(799.2,195.5) rotate(-90)">9</text>
<text x="0.0" y="0.0" font-size="9.5" text-anchor="start" letter-spacing="0.4" fill="#000000" font-weight="normal" transform="translate(805.8,175.5) rotate(-90)">D2</text>
<line x1="815" y1="181" x2="815" y2="208" stroke="#780000" stroke-width="2"/>
<rect x="806" y="188" width="5" height="5" fill="#3C3CE6"/>
<text x="0.0" y="0.0" font-size="9.5" text-anchor="end" letter-spacing="0" fill="#000000" font-weight="normal" transform="translate(812.2,195.5) rotate(-90)">10</text>
<text x="0.0" y="0.0" font-size="9.5" text-anchor="start" letter-spacing="0.4" fill="#000000" font-weight="normal" transform="translate(818.8,175.5) rotate(-90)">D3</text>
<line x1="828" y1="181" x2="828" y2="208" stroke="#780000" stroke-width="2"/>
<rect x="819" y="188" width="5" height="5" fill="#3C3CE6"/>
<text x="0.0" y="0.0" font-size="9.5" text-anchor="end" letter-spacing="0" fill="#000000" font-weight="normal" transform="translate(825.2,195.5) rotate(-90)">11</text>
<text x="0.0" y="0.0" font-size="9.5" text-anchor="start" letter-spacing="0.4" fill="#000000" font-weight="normal" transform="translate(831.8,175.5) rotate(-90)">D4</text>
<line x1="841" y1="181" x2="841" y2="208" stroke="#780000" stroke-width="2"/>
<rect x="832" y="188" width="5" height="5" fill="#3C3CE6"/>
<text x="0.0" y="0.0" font-size="9.5" text-anchor="end" letter-spacing="0" fill="#000000" font-weight="normal" transform="translate(838.2,195.5) rotate(-90)">12</text>
<text x="0.0" y="0.0" font-size="9.5" text-anchor="start" letter-spacing="0.4" fill="#000000" font-weight="normal" transform="translate(844.8,175.5) rotate(-90)">D5</text>
<line x1="854" y1="181" x2="854" y2="208" stroke="#780000" stroke-width="2"/>
<rect x="845" y="188" width="5" height="5" fill="#3C3CE6"/>
<text x="0.0" y="0.0" font-size="9.5" text-anchor="end" letter-spacing="0" fill="#000000" font-weight="normal" transform="translate(851.2,195.5) rotate(-90)">13</text>
<text x="0.0" y="0.0" font-size="9.5" text-anchor="start" letter-spacing="0.4" fill="#000000" font-weight="normal" transform="translate(857.8,175.5) rotate(-90)">D6</text>
<line x1="868" y1="181" x2="868" y2="208" stroke="#780000" stroke-width="2"/>
<rect x="859" y="188" width="5" height="5" fill="#3C3CE6"/>
<text x="0.0" y="0.0" font-size="9.5" text-anchor="end" letter-spacing="0" fill="#000000" font-weight="normal" transform="translate(865.2,195.5) rotate(-90)">14</text>
<text x="0.0" y="0.0" font-size="9.5" text-anchor="start" letter-spacing="0.4" fill="#000000" font-weight="normal" transform="translate(871.8,175.5) rotate(-90)">D7</text>
<polyline points="671,207 671,253" fill="none" stroke="#003c00" stroke-width="2" stroke-linejoin="miter"/>
<polyline points="684,207 684,235 634,235" fill="none" stroke="#003c00" stroke-width="2" stroke-linejoin="miter"/>
<polygon points="620.5,234.6 634.5,228.1 634.5,241.1" fill="none" stroke="#003c00" stroke-width="2"/>
<text x="0.0" y="0.0" font-size="9.5" text-anchor="start" letter-spacing="0.4" fill="#000000" font-weight="normal" transform="translate(612,248) rotate(-90)">VDD</text>
<line x1="658" y1="253" x2="684" y2="253" stroke="#003c00" stroke-width="2"/>
<line x1="664" y1="260" x2="678" y2="260" stroke="#003c00" stroke-width="2"/>
<rect x="669.5" y="265.4" width="3" height="2" fill="#003c00"/>
<line x1="670" y1="222" x2="816" y2="222" stroke="#003c00" stroke-width="2"/>
<line x1="737" y1="207" x2="737" y2="222" stroke="#003c00" stroke-width="2"/>
<line x1="776" y1="207" x2="776" y2="222" stroke="#003c00" stroke-width="2"/>
<line x1="789" y1="207" x2="789" y2="222" stroke="#003c00" stroke-width="2"/>
<line x1="802" y1="207" x2="802" y2="222" stroke="#003c00" stroke-width="2"/>
<polyline points="815,207 815,222" fill="none" stroke="#003c00" stroke-width="2" stroke-linejoin="miter"/>
<circle cx="671.0" cy="222.0" r="2.8" fill="#003c00"/>
<circle cx="737.0" cy="222.0" r="2.8" fill="#003c00"/>
<circle cx="776.0" cy="222.0" r="2.8" fill="#003c00"/>
<circle cx="789.0" cy="222.0" r="2.8" fill="#003c00"/>
<circle cx="802.0" cy="222.0" r="2.8" fill="#003c00"/>
<polyline points="534,287 828,287 828,207" fill="none" stroke="#003c00" stroke-width="2" stroke-linejoin="miter"/>
<polyline points="534,300 841,300 841,207" fill="none" stroke="#003c00" stroke-width="2" stroke-linejoin="miter"/>
<polyline points="534,313 854,313 854,207" fill="none" stroke="#003c00" stroke-width="2" stroke-linejoin="miter"/>
<polyline points="534,326 868,326 868,207" fill="none" stroke="#003c00" stroke-width="2" stroke-linejoin="miter"/>
<polyline points="534,339 723,339 723,207" fill="none" stroke="#003c00" stroke-width="2" stroke-linejoin="miter"/>
<polyline points="534,352 750,352 750,207" fill="none" stroke="#003c00" stroke-width="2" stroke-linejoin="miter"/>
<line x1="534" y1="483" x2="716" y2="483" stroke="#003c00" stroke-width="2"/>
<polyline points="534,496 561,496 561,836 469,836" fill="none" stroke="#003c00" stroke-width="2" stroke-linejoin="miter"/>
<rect x="743" y="470" width="157" height="104" fill="#C9C9AB" stroke="#780000" stroke-width="2" rx="2"/>
<rect x="782.5" y="483.5" width="105.0" height="78.0" fill="#000" stroke="#500000" stroke-width="1" rx="0"/>
<rect x="789" y="489.5" width="7" height="7" fill="#10e010"/>
<line x1="716" y1="483" x2="743" y2="483" stroke="#780000" stroke-width="2"/>
<rect x="727" y="473" width="6" height="6" fill="#E84848"/>
<text x="751.0" y="487.0" font-size="9.5" text-anchor="start" letter-spacing="0.5" fill="#000000" font-weight="normal" >RXD</text>
<line x1="716" y1="509" x2="743" y2="509" stroke="#780000" stroke-width="2"/>
<rect x="727" y="499" width="6" height="6" fill="#E84848"/>
<text x="751.0" y="513.0" font-size="9.5" text-anchor="start" letter-spacing="0.5" fill="#000000" font-weight="normal" >TXD</text>
<line x1="716" y1="535" x2="743" y2="535" stroke="#780000" stroke-width="2"/>
<rect x="727" y="525" width="6" height="6" fill="#E84848"/>
<text x="751.0" y="539.0" font-size="9.5" text-anchor="start" letter-spacing="0.5" fill="#000000" font-weight="normal" >RTS</text>
<line x1="716" y1="561" x2="743" y2="561" stroke="#780000" stroke-width="2"/>
<rect x="727" y="551" width="6" height="6" fill="#808080"/>
<text x="751.0" y="565.0" font-size="9.5" text-anchor="start" letter-spacing="0.5" fill="#000000" font-weight="normal" >CTS</text>
<line x1="534" y1="483" x2="716" y2="483" stroke="#003c00" stroke-width="2"/>
<g stroke="#1e1e68" stroke-width="1.5"><circle cx="665" cy="469.8" r="3.4" fill="#8585e8"/><line x1="659" y1="469.8" x2="661.6" y2="469.8"/><line x1="668.4" y1="469.8" x2="671" y2="469.8"/><line x1="665" y1="463.8" x2="665" y2="466.4"/><line x1="665" y1="473.2" x2="665" y2="475.8"/></g><circle cx="665" cy="469.8" r="1" fill="#3030a0"/>
<polygon points="128.3,470.0 142.3,463.5 142.3,476.5" fill="none" stroke="#003c00" stroke-width="2"/>
<line x1="142" y1="470" x2="186" y2="470" stroke="#003c00" stroke-width="2"/>
<rect x="186" y="465" width="42" height="10" fill="#C9C9AB" stroke="#780000" stroke-width="2" rx="0"/>
<line x1="228" y1="470" x2="286" y2="470" stroke="#003c00" stroke-width="2"/>
<line x1="172" y1="470" x2="186" y2="470" stroke="#780000" stroke-width="2"/>
<line x1="228" y1="470" x2="242" y2="470" stroke="#780000" stroke-width="2"/>
<circle cx="253.0" cy="470.0" r="2.6" fill="#003c00"/>
<rect x="172" y="461" width="6" height="6" fill="#E84848"/>
<rect x="237" y="461" width="6" height="6" fill="#E84848"/>
<text x="185.6" y="459.8" font-size="15.5" text-anchor="start" letter-spacing="0" fill="#000000" font-weight="normal" textLength="19.3" lengthAdjust="spacingAndGlyphs" >R1</text>
<text x="187.0" y="485.6" font-size="9.5" text-anchor="start" letter-spacing="0" fill="#000000" font-weight="normal" >10k</text>
<line x1="253" y1="470" x2="253" y2="493" stroke="#003c00" stroke-width="2"/>
<line x1="253" y1="493" x2="253" y2="500" stroke="#780000" stroke-width="2"/>
<line x1="253" y1="531" x2="253" y2="540" stroke="#780000" stroke-width="2"/>
<line x1="253" y1="540" x2="253" y2="581" stroke="#003c00" stroke-width="2"/>
<circle cx="253" cy="500" r="3" fill="#f2d6c8" stroke="#780000" stroke-width="1.6"/>
<circle cx="253" cy="530.6" r="3" fill="#f2d6c8" stroke="#780000" stroke-width="1.6"/>
<line x1="242" y1="497" x2="242" y2="535" stroke="#780000" stroke-width="1.8"/>
<rect x="236" y="505" width="6" height="22" fill="#C9C9AB" stroke="#780000" stroke-width="1.8" rx="0"/>
<circle cx="240" cy="488.8" r="5" fill="#8a0000"/>
<rect x="243" y="479" width="6" height="6" fill="#E84848"/>
<rect x="243" y="545" width="6" height="6" fill="#3C3CE6"/>
<line x1="240" y1="581" x2="266" y2="581" stroke="#003c00" stroke-width="2"/>
<line x1="246" y1="588" x2="260" y2="588" stroke="#003c00" stroke-width="2"/>
<rect x="251.5" y="593.0" width="3" height="2" fill="#003c00"/>
<text x="0.0" y="0.0" font-size="12.5" text-anchor="start" letter-spacing="0" fill="#7a0000" font-weight="bold" textLength="37.5" lengthAdjust="spacingAndGlyphs" transform="translate(225.5,535) rotate(-90)">RESET</text>
<polygon points="69.6,731.3 83.6,724.8 83.6,737.8" fill="none" stroke="#003c00" stroke-width="2"/>
<line x1="84" y1="731" x2="128" y2="731" stroke="#003c00" stroke-width="2"/>
<rect x="128" y="726" width="40" height="11" fill="#C9C9AB" stroke="#780000" stroke-width="2" rx="0"/>
<line x1="168" y1="731" x2="220" y2="731" stroke="#003c00" stroke-width="2"/>
<line x1="113" y1="731" x2="128" y2="731" stroke="#780000" stroke-width="2"/>
<line x1="168" y1="731" x2="182" y2="731" stroke="#780000" stroke-width="2"/>
<circle cx="200.0" cy="731.3" r="2.6" fill="#003c00"/>
<rect x="112" y="722" width="6" height="6" fill="#E84848"/>
<rect x="178" y="722" width="6" height="6" fill="#E84848"/>
<text x="127.0" y="720.8" font-size="15.5" text-anchor="start" letter-spacing="0" fill="#000000" font-weight="normal" textLength="19.6" lengthAdjust="spacingAndGlyphs" >R2</text>
<text x="128.0" y="748.0" font-size="9.5" text-anchor="start" letter-spacing="0" fill="#000000" font-weight="normal" >10k</text>
<line x1="200" y1="731" x2="200" y2="761" stroke="#003c00" stroke-width="2"/>
<line x1="200" y1="761" x2="200" y2="768" stroke="#780000" stroke-width="2"/>
<line x1="200" y1="800" x2="200" y2="809" stroke="#780000" stroke-width="2"/>
<line x1="200" y1="809" x2="200" y2="843" stroke="#003c00" stroke-width="2"/>
<circle cx="200" cy="767.8" r="3" fill="#f2d6c8" stroke="#780000" stroke-width="1.6"/>
<circle cx="200" cy="799.8" r="3" fill="#f2d6c8" stroke="#780000" stroke-width="1.6"/>
<line x1="190" y1="765" x2="190" y2="804" stroke="#780000" stroke-width="1.8"/>
<rect x="183" y="773" width="7" height="21" fill="#C9C9AB" stroke="#780000" stroke-width="1.8" rx="0"/>
<circle cx="186.5" cy="757.6" r="5" fill="#8a0000"/>
<rect x="191" y="748" width="6" height="6" fill="#E84848"/>
<rect x="191" y="814" width="6" height="6" fill="#3C3CE6"/>
<line x1="187" y1="843" x2="213" y2="843" stroke="#003c00" stroke-width="2"/>
<line x1="193" y1="849" x2="207" y2="849" stroke="#003c00" stroke-width="2"/>
<rect x="198.5" y="854.8" width="3" height="2" fill="#003c00"/>
<text x="0.0" y="0.0" font-size="12.5" text-anchor="start" letter-spacing="0" fill="#7a0000" font-weight="bold" textLength="37.5" lengthAdjust="spacingAndGlyphs" transform="translate(173,804.2) rotate(-90)">RESET</text>
<polygon points="613.0,627.2 606.7,640.0 619.3,640.0" fill="none" stroke="#003c00" stroke-width="2"/>
<line x1="613" y1="640" x2="613" y2="659" stroke="#003c00" stroke-width="2"/>
<line x1="613" y1="659" x2="613" y2="673" stroke="#780000" stroke-width="2"/>
<rect x="608" y="673" width="10" height="39" fill="#C9C9AB" stroke="#780000" stroke-width="2" rx="0"/>
<line x1="613" y1="712" x2="613" y2="722" stroke="#780000" stroke-width="2"/>
<line x1="613" y1="722" x2="613" y2="751" stroke="#003c00" stroke-width="2"/>
<line x1="600" y1="751" x2="626" y2="751" stroke="#003c00" stroke-width="2"/>
<line x1="606" y1="757" x2="620" y2="757" stroke="#003c00" stroke-width="2"/>
<rect x="611.5" y="762.7" width="3" height="2" fill="#003c00"/>
<rect x="604" y="650" width="6" height="6" fill="#E84848"/>
<rect x="604" y="728" width="6" height="6" fill="#3C3CE6"/>
<text x="631.7" y="667.0" font-size="15.5" text-anchor="start" letter-spacing="0" fill="#000000" font-weight="normal" textLength="29" lengthAdjust="spacingAndGlyphs" >RV1</text>
<circle cx="629.3" cy="677.5" r="5" fill="#7e0000" stroke="#a02020" stroke-width="0.6"/>
<circle cx="629.3" cy="707" r="5" fill="#7e0000" stroke="#a02020" stroke-width="0.6"/>
<text x="627.0" y="695.3" font-size="9.5" text-anchor="start" letter-spacing="0" fill="#000000" font-weight="normal" >10k</text>
<text x="643.6" y="710.2" font-size="12.5" text-anchor="start" letter-spacing="0" fill="#7a0000" font-weight="bold" textLength="30" lengthAdjust="spacingAndGlyphs" >Level</text>
<text x="0.0" y="0.0" font-size="6.8" text-anchor="start" letter-spacing="0" fill="#800000" font-weight="bold" transform="translate(610.8,684) rotate(90)">35%</text>
<polyline points="593,692 599,692 603,694 607,694" fill="none" stroke="#780000" stroke-width="1.8" stroke-linejoin="miter"/>
<polyline points="603,691 607,694 603,698" fill="none" stroke="#780000" stroke-width="1.8" stroke-linejoin="miter"/>
<polygon points="723.3,627.4 717.0,640.2 729.6,640.2" fill="none" stroke="#003c00" stroke-width="2"/>
<line x1="723" y1="640" x2="723" y2="659" stroke="#003c00" stroke-width="2"/>
<line x1="723" y1="659" x2="723" y2="673" stroke="#780000" stroke-width="2"/>
<rect x="718" y="673" width="11" height="39" fill="#C9C9AB" stroke="#780000" stroke-width="2" rx="0"/>
<line x1="723" y1="712" x2="723" y2="722" stroke="#780000" stroke-width="2"/>
<line x1="723" y1="722" x2="723" y2="751" stroke="#003c00" stroke-width="2"/>
<line x1="710" y1="751" x2="736" y2="751" stroke="#003c00" stroke-width="2"/>
<line x1="716" y1="757" x2="730" y2="757" stroke="#003c00" stroke-width="2"/>
<rect x="721.8" y="762.7" width="3" height="2" fill="#003c00"/>
<rect x="714" y="650" width="6" height="6" fill="#E84848"/>
<rect x="714" y="728" width="6" height="6" fill="#3C3CE6"/>
<text x="742.4" y="667.0" font-size="15.5" text-anchor="start" letter-spacing="0" fill="#000000" font-weight="normal" textLength="30" lengthAdjust="spacingAndGlyphs" >RV2</text>
<circle cx="739.5999999999999" cy="677.5" r="5" fill="#7e0000" stroke="#a02020" stroke-width="0.6"/>
<circle cx="739.5999999999999" cy="707" r="5" fill="#7e0000" stroke="#a02020" stroke-width="0.6"/>
<text x="737.3" y="695.3" font-size="9.5" text-anchor="start" letter-spacing="0" fill="#000000" font-weight="normal" >10k</text>
<text x="752.3" y="710.2" font-size="12.5" text-anchor="start" letter-spacing="0" fill="#7a0000" font-weight="bold" textLength="33" lengthAdjust="spacingAndGlyphs" >Noise</text>
<text x="0.0" y="0.0" font-size="6.8" text-anchor="start" letter-spacing="0" fill="#800000" font-weight="bold" transform="translate(721.0999999999999,684) rotate(90)">11%</text>
<polyline points="703,692 710,692 710,708 717,708" fill="none" stroke="#780000" stroke-width="1.8" stroke-linejoin="miter"/>
<polyline points="713,704 717,708 713,712" fill="none" stroke="#780000" stroke-width="1.8" stroke-linejoin="miter"/>
<polygon points="841.3,627.0 835.0,639.8 847.6,639.8" fill="none" stroke="#003c00" stroke-width="2"/>
<line x1="841" y1="640" x2="841" y2="659" stroke="#003c00" stroke-width="2"/>
<line x1="841" y1="659" x2="841" y2="673" stroke="#780000" stroke-width="2"/>
<rect x="836" y="673" width="11" height="39" fill="#C9C9AB" stroke="#780000" stroke-width="2" rx="0"/>
<line x1="841" y1="712" x2="841" y2="722" stroke="#780000" stroke-width="2"/>
<line x1="841" y1="722" x2="841" y2="751" stroke="#003c00" stroke-width="2"/>
<line x1="828" y1="751" x2="854" y2="751" stroke="#003c00" stroke-width="2"/>
<line x1="834" y1="757" x2="848" y2="757" stroke="#003c00" stroke-width="2"/>
<rect x="839.8" y="762.7" width="3" height="2" fill="#003c00"/>
<rect x="832" y="650" width="6" height="6" fill="#E84848"/>
<rect x="832" y="728" width="6" height="6" fill="#3C3CE6"/>
<text x="860.0" y="667.0" font-size="15.5" text-anchor="start" letter-spacing="0" fill="#000000" font-weight="normal" textLength="30.5" lengthAdjust="spacingAndGlyphs" >RV3</text>
<circle cx="857.5999999999999" cy="677.5" r="5" fill="#7e0000" stroke="#a02020" stroke-width="0.6"/>
<circle cx="857.5999999999999" cy="707" r="5" fill="#7e0000" stroke="#a02020" stroke-width="0.6"/>
<text x="855.3" y="695.3" font-size="9.5" text-anchor="start" letter-spacing="0" fill="#000000" font-weight="normal" >10k</text>
<text x="867.4" y="710.2" font-size="12.5" text-anchor="start" letter-spacing="0" fill="#7a0000" font-weight="bold" textLength="52" lengthAdjust="spacingAndGlyphs" >Spurious</text>
<text x="878.2" y="723.4" font-size="12.5" text-anchor="start" letter-spacing="0" fill="#7a0000" font-weight="bold" textLength="30.2" lengthAdjust="spacingAndGlyphs" >Level</text>
<text x="0.0" y="0.0" font-size="6.8" text-anchor="start" letter-spacing="0" fill="#800000" font-weight="bold" transform="translate(839.0999999999999,684) rotate(90)">100%</text>
<polyline points="822,692 828,692 828,673 835,673" fill="none" stroke="#780000" stroke-width="1.8" stroke-linejoin="miter"/>
<polyline points="831,669 835,673 831,677" fill="none" stroke="#780000" stroke-width="1.8" stroke-linejoin="miter"/>
<polygon points="972.0,633.2 965.7,646.0 978.3,646.0" fill="none" stroke="#003c00" stroke-width="2"/>
<line x1="972" y1="646" x2="972" y2="659" stroke="#003c00" stroke-width="2"/>
<line x1="972" y1="659" x2="972" y2="673" stroke="#780000" stroke-width="2"/>
<rect x="966" y="673" width="12" height="39" fill="#C9C9AB" stroke="#780000" stroke-width="2" rx="0"/>
<line x1="972" y1="712" x2="972" y2="722" stroke="#780000" stroke-width="2"/>
<line x1="972" y1="722" x2="972" y2="751" stroke="#003c00" stroke-width="2"/>
<line x1="959" y1="751" x2="985" y2="751" stroke="#003c00" stroke-width="2"/>
<line x1="965" y1="757" x2="979" y2="757" stroke="#003c00" stroke-width="2"/>
<rect x="970.5" y="762.7" width="3" height="2" fill="#003c00"/>
<rect x="963" y="650" width="6" height="6" fill="#E84848"/>
<rect x="963" y="728" width="6" height="6" fill="#3C3CE6"/>
<text x="991.5" y="667.0" font-size="15.5" text-anchor="start" letter-spacing="0" fill="#000000" font-weight="normal" textLength="29.5" lengthAdjust="spacingAndGlyphs" >RV4</text>
<circle cx="988.3" cy="677.5" r="5" fill="#7e0000" stroke="#a02020" stroke-width="0.6"/>
<circle cx="988.3" cy="707" r="5" fill="#7e0000" stroke="#a02020" stroke-width="0.6"/>
<text x="986.0" y="695.3" font-size="9.5" text-anchor="start" letter-spacing="0" fill="#000000" font-weight="normal" >10k</text>
<text x="1001.1" y="710.2" font-size="12.5" text-anchor="start" letter-spacing="0" fill="#7a0000" font-weight="bold" textLength="59.2" lengthAdjust="spacingAndGlyphs" >Spuriocity</text>
<text x="0.0" y="0.0" font-size="6.8" text-anchor="start" letter-spacing="0" fill="#800000" font-weight="bold" transform="translate(969.8,684) rotate(90)">73%</text>
<polyline points="953,692 959,692 959,684 966,684" fill="none" stroke="#780000" stroke-width="1.8" stroke-linejoin="miter"/>
<polyline points="962,680 966,684 962,688" fill="none" stroke="#780000" stroke-width="1.8" stroke-linejoin="miter"/>
<rect x="584" y="695" width="6" height="6" fill="#808080"/>
<rect x="694" y="695" width="6" height="6" fill="#3C3CE6"/>
<rect x="812" y="696" width="6" height="6" fill="#E84848"/>
<rect x="943" y="695" width="6" height="6" fill="#E84848"/>
<polyline points="469,692 593,692" fill="none" stroke="#003c00" stroke-width="2" stroke-linejoin="miter"/>
<polyline points="469,705 541,705 541,777 684,777 684,692 703,692" fill="none" stroke="#003c00" stroke-width="2" stroke-linejoin="miter"/>
<polyline points="469,718 528,718 528,790 809,790 809,692 822,692" fill="none" stroke="#003c00" stroke-width="2" stroke-linejoin="miter"/>
<polyline points="469,731 515,731 515,803 940,803 940,692 953,692" fill="none" stroke="#003c00" stroke-width="2" stroke-linejoin="miter"/>
</svg>
<div class="vt" id="vtf"></div>
<div class="vt" id="vtt"><span>Virtual Terminal</span></div>
<div class="vt" id="vtc"><svg width="10" height="10" style="position:absolute;left:0;top:0"><path d="M2 2L8 8M8 2L2 8" stroke="#fff" stroke-width="2.2"/></svg></div>
<div class="vt" id="vti"></div><div class="vt" id="vtgt"></div><div class="vt" id="vtgl"></div>
<div class="vt" id="vts"><pre>Smpl= 6796  Avg= 0  Rejected
Smpl= 6796  Avg= 0  Rejected
Smpl= 6796  Avg= 6796
Smpl= 6797  Avg= 6796
Smpl= 6799  Avg= 6796
Smpl= 6797  Avg= 6796
Smpl= 6798  Avg= 6796
Smpl= 6800  Avg= 6797
Smpl= 6799  Avg= 6797
Smpl= 6797  Avg= 6797
Smpl= 6798  Avg= 6797
Smpl= 6796  Avg= 6797
Smpl= 6797  Avg= 6797
Smpl= 6798  Avg= 6797
Smpl= 6796  Avg= 6797
Smpl= 6797  Avg= 6797
Smpl= 6798  Avg= 6797
Smpl= 6796  Avg= 6797
Smpl= 6797  Avg= 6797
Smpl= 6799  Avg= 6797
Smpl= 6798  Avg= 6797
Smpl= 7324  Avg= 6797  Rejected
Smpl= 6796  Avg= 6797
Smpl= 6797  Avg= 6797
Smpl= 6798  Avg= 6797
Smpl= 6800  Avg= 6798
Smpl= 6800  Avg= 6799
Smpl= 6799  Avg= 6799
Smpl= 6797  Avg= 6799
Smpl= 6798  Avg= 6799
Smpl= 6796  Avg= 6799
Smpl= 6797  Avg= 6799
Smpl= 6798  Avg= 6799
Smpl= 6796  Avg= 6799
Smpl= 6797  Avg= 6799
Smpl= 6281  Avg= 6799  Rejected
Smpl= 6800  Avg= 6800
Smpl= 6799  Avg= 6799
Smpl= 6798  Avg= 6799
Smpl= 6796  Avg= 6799
Smpl= 6249  Avg= 6799  Rejected
Smpl= 6799  Avg= 6799
Smpl= 6798  Avg= 6799
Smpl= 3900  Avg= 6799  Rejected
Smpl= 3899  Avg= 6799  Rejected
Smpl= 3898  Avg= 3898
Smpl= 3900  Avg= 3899
Smpl= 3900  Avg= 3900
Smpl= 3380  Avg= 3900  Rejected
Smpl= 3899  Avg= 3899
Smpl= 3898  Avg= 3899
Smpl= 3900  Avg= 3900
Smpl= 3899  Avg= 3899
Smpl= 3898  Avg= 3899
Smpl= 3896  Avg= 3899
Smpl= 3896  Avg= 3899
Smpl= 3896  Avg= 3899
Smpl= 3897  Avg= 3899
Smpl= 3899  Avg= 3899
Smpl= 3898  Avg= 3899
Smpl= 3896  Avg= 3899
Smpl= 3896  Avg= 3899
Smpl= 3896  Avg= 3899
Smpl= 3896  Avg= 3899
Smpl= 3897  Avg= 3899
Smpl= 3898  Avg= 3899
Smpl= 3896  Avg= 3899
Smpl= 3897  Avg= 3899
Smpl= 3898  Avg= 3899
Smpl= 3900  Avg= 3900
Smpl= 3899  Avg= 3899
Smpl= 3898  Avg= 3899
Smpl= 3896  Avg= 3899</pre></div>
<div class="vt" id="vtsb"></div><div class="vt" id="vtsb2"></div><div class="vt" id="vtrb"></div><div class="vt" id="vtbb"></div>
<div class="vt sbb" style="top:33px">&#8963;</div><div class="vt sbb" style="top:904px">&#8964;</div>
</body></html>
